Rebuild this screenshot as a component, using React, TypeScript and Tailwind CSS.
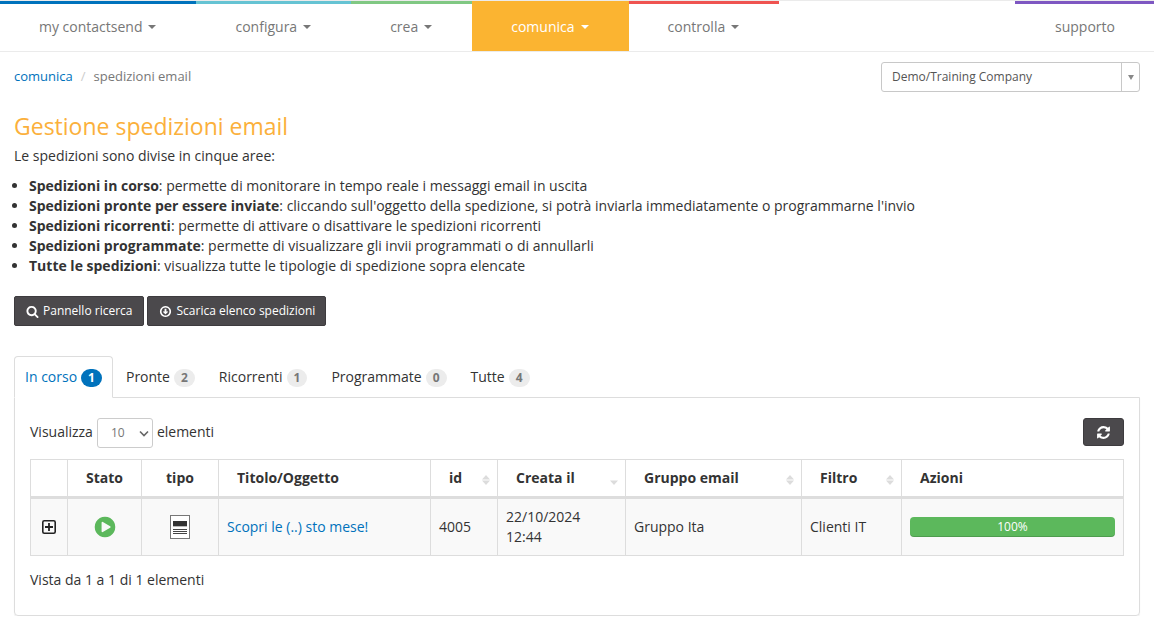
import { useState } from 'react';

const NAV_ITEMS = [
  { label: 'my contactsend', border: 'border-[#0072bc]' },
  { label: 'configura', border: 'border-[#65c3d3]' },
  { label: 'crea', border: 'border-[#80c883]' },
  { label: 'comunica', border: 'border-[#fbb431]', active: true },
  { label: 'controlla', border: 'border-[#ef5350]' },
];

const AREAS = [
  { name: 'Spedizioni in corso', text: 'permette di monitorare in tempo reale i messaggi email in uscita' },
  { name: 'Spedizioni pronte per essere inviate', text: "cliccando sull'oggetto della spedizione, si potrà inviarla immediatamente o programmarne l'invio" },
  { name: 'Spedizioni ricorrenti', text: 'permette di attivare o disattivare le spedizioni ricorrenti' },
  { name: 'Spedizioni programmate', text: 'permette di visualizzare gli invii programmati o di annullarli' },
  { name: 'Tutte le spedizioni', text: 'visualizza tutte le tipologie di spedizione sopra elencate' },
];

const TABS = [
  { label: 'In corso', count: 1 },
  { label: 'Pronte', count: 2 },
  { label: 'Ricorrenti', count: 1 },
  { label: 'Programmate', count: 0 },
  { label: 'Tutte', count: 4 },
];

const COLUMNS: { label: string; width: string; center?: boolean; sort?: 'both' | 'desc' }[] = [
  { label: '', width: 'w-[37px]' },
  { label: 'Stato', width: 'w-[74px]', center: true },
  { label: 'tipo', width: 'w-[77px]', center: true },
  { label: 'Titolo/Oggetto', width: 'w-[212px]' },
  { label: 'id', width: 'w-[67px]', sort: 'both' },
  { label: 'Creata il', width: 'w-[128px]', sort: 'desc' },
  { label: 'Gruppo email', width: 'w-[176px]', sort: 'both' },
  { label: 'Filtro', width: 'w-[100px]', sort: 'both' },
  { label: 'Azioni', width: 'w-[222px]' },
];

const ICONS = {
  search: 'M1216 832q0-185-131.5-316.5t-316.5-131.5-316.5 131.5-131.5 316.5 131.5 316.5 316.5 131.5 316.5-131.5 131.5-316.5zm512 832q0 52-38 90t-90 38q-54 0-90-38l-343-342q-179 124-399 124-143 0-273.5-55.5t-225-150-150-225-55.5-273.5 55.5-273.5 150-225 225-150 273.5-55.5 273.5 55.5 225 150 150 225 55.5 273.5q0 220-124 399l343 343q37 37 37 90z',
  download: 'M1248 928q0 14-10 24l-319 319q-10 9-23 9t-23-9l-320-320q-9-9-9-23 0-13 9.5-22.5t22.5-9.5h192v-352q0-13 9.5-22.5t22.5-9.5h192q13 0 22.5 9.5t9.5 22.5v352h192q14 0 23 9t9 23zm-352-576q-148 0-273 73t-198 198-73 273 73 273 198 198 273 73 273-73 198-198 73-273-73-273-198-198-273-73zm768 544q0 209-103 385.5t-279.5 279.5-385.5 103-385.5-103-279.5-279.5-103-385.5 103-385.5 279.5-279.5 385.5-103 385.5 103 279.5 279.5 103 385.5z',
  refresh: 'M1639 1056q0 5-1 7-64 268-268 434.5t-478 166.5q-146 0-282.5-55t-243.5-157l-129 129q-19 19-45 19t-45-19-19-45v-448q0-26 19-45t45-19h448q26 0 45 19t19 45-19 45l-137 137q71 66 161 102t187 36q134 0 250-65t186-179q11-17 53-117 8-23 30-23h192q13 0 22.5 9.5t9.5 22.5zm25-800v448q0 26-19 45t-45 19h-448q-26 0-45-19t-19-45 19-45l138-138q-148-137-349-137-134 0-250 65t-186 179q-11 17-53 117-8 23-30 23h-199q-13 0-22.5-9.5t-9.5-22.5v-7q65-268 270-434.5t480-166.5q146 0 284 55.5t245 156.5l130-129q19-19 45-19t45 19 19 45z',
  play: 'M896 128q209 0 385.5 103t279.5 279.5 103 385.5-103 385.5-279.5 279.5-385.5 103-385.5-103-279.5-279.5-103-385.5 103-385.5 279.5-279.5 385.5-103zm384 823q32-18 32-55t-32-55l-544-320q-31-19-64-1-32 19-32 56v640q0 37 32 56 16 8 32 8 17 0 32-9z',
};

function Icon({ name, className }: { name: keyof typeof ICONS; className: string }) {
  return (
    <svg className={className} viewBox="0 0 1792 1792" fill="currentColor" aria-hidden="true">
      <path d={ICONS[name]} />
    </svg>
  );
}

function Caret() {
  return (
    <svg className="w-2 h-1" viewBox="0 0 8 4" fill="currentColor" aria-hidden="true">
      <path d="M0 0h8L4 4z" />
    </svg>
  );
}

function SortIcon({ direction }: { direction: 'both' | 'desc' }) {
  return (
    <svg className="w-2 h-[10px] mt-1" viewBox="0 0 8 10" fill="#dcdcdc" aria-hidden="true">
      {direction === 'both' && <path d="M4 0l4 4.5H0z" />}
      <path d="M0 5.5h8L4 10z" />
    </svg>
  );
}

export default function App() {
  const [activeTab, setActiveTab] = useState('In corso');

  return (
    <div className="bg-white font-['Open_Sans',sans-serif] text-sm leading-5 text-[#333]">
      <nav className="flex h-[52px] border-y border-[#ebebeb] text-[#777]">
        {NAV_ITEMS.map(item => (
          <button
            key={item.label}
            className={`flex items-center gap-[6px] border-t-[3px] pr-10 pl-[39px] pb-[2px] ${item.border} ${
              item.active ? 'bg-[#fbb431] text-white' : ''
            }`}
          >
            {item.label}
            <Caret />
          </button>
        ))}
        <a href="#supporto" className="ml-auto flex items-center border-t-[3px] border-[#7e57c2] pr-[39px] pl-10 pb-[2px]">
          supporto
        </a>
      </nav>

      <main className="px-[14px]">
        <div className="flex items-start justify-between pt-[10px]">
          <div className="flex gap-2 pt-1 text-[13px] text-[#777]">
            <a href="#comunica" className="text-[#0072bc]">comunica</a>
            <span className="text-[#ccc]">/</span>
            <span>spedizioni email</span>
          </div>
          <div className="relative">
            <select
              aria-label="Azienda"
              className="block h-[30px] w-[259px] appearance-none rounded-[3px] border border-[#c8c8c8] bg-white pl-[10px] text-xs text-[#555]"
            >
              <option>Demo/Training Company</option>
            </select>
            <span className="pointer-events-none absolute inset-y-0 right-0 flex w-[19px] items-center justify-center border-l border-[#c8c8c8] text-[#888]">
              <svg className="w-[6px] h-[5px]" viewBox="0 0 6 5" fill="currentColor" aria-hidden="true">
                <path d="M0 0h6L3 5z" />
              </svg>
            </span>
          </div>
        </div>

        <h1 className="mt-5 text-[23px] leading-[28px] text-[#fbb03b]">Gestione spedizioni email</h1>
        <p className="mt-[6px]">Le spedizioni sono divise in cinque aree:</p>
        <ul className="mt-[10px] list-disc pl-[15px]">
          {AREAS.map(area => (
            <li key={area.name}>
              <strong>{area.name}</strong>: {area.text}
            </li>
          ))}
        </ul>

        <div className="mt-5 flex gap-[3px] text-xs text-white">
          <button className="flex h-[30px] items-center gap-1 rounded-[2px] border border-[#3d3b3e] bg-[#4b494c] px-[11px]">
            <Icon name="search" className="w-[13px] h-[13px]" />
            Pannello ricerca
          </button>
          <button className="flex h-[30px] items-center gap-1 rounded-[2px] border border-[#3d3b3e] bg-[#4b494c] pr-[10px] pl-[11px]">
            <Icon name="download" className="w-[13px] h-[13px]" />
            Scarica elenco spedizioni
          </button>
        </div>

        <div role="tablist" className="mt-[30px] flex gap-[2px]">
          {TABS.map(tab => (
            <button
              key={tab.label}
              role="tab"
              aria-selected={tab.label === activeTab}
              onClick={() => setActiveTab(tab.label)}
              className={`relative z-10 -mb-px flex h-[42px] items-center gap-1 rounded-t border px-[10px] ${
                tab.label === activeTab ? 'border-[#ddd] border-b-white bg-white text-[#0072bc]' : 'border-transparent'
              }`}
            >
              {tab.label}
              <span
                className={`mt-[2px] rounded-full px-[7px] text-xs leading-[18px] font-bold ${
                  tab.label === activeTab ? 'bg-[#0072bc] text-white' : 'bg-[#ececec] text-[#777]'
                }`}
              >
                {tab.count}
              </span>
            </button>
          ))}
        </div>

        <section className="rounded-b border border-[#ddd] px-[15px] pt-5 pb-[25px] shadow-[0_1px_1px_rgba(0,0,0,0.08)]">
          <div className="flex items-start justify-between">
            <label className="flex items-center gap-1">
              <span className="pb-[2px]">Visualizza</span>
              <span className="relative">
                <select className="block h-[30px] w-14 appearance-none rounded-[3px] border border-[#ccc] bg-white pl-[13px] text-xs text-[#777]">
                  <option>10</option>
                  <option>25</option>
                  <option>50</option>
                </select>
                <svg
                  className="pointer-events-none absolute top-3 right-1 w-[10px] h-[7px]"
                  viewBox="0 0 10 7"
                  fill="none"
                  stroke="#666"
                  strokeWidth="1.6"
                  aria-hidden="true"
                >
                  <path d="M1 1.5l4 4 4-4" />
                </svg>
              </span>
              <span className="pb-[2px]">elementi</span>
            </label>
            <button
              aria-label="Aggiorna"
              className="flex h-7 w-[41px] items-center justify-center rounded-[3px] border border-[#3d3b3e] bg-[#4b494c] text-white"
            >
              <Icon name="refresh" className="w-[15px] h-[15px]" />
            </button>
          </div>

          <table className="mt-[11px] w-full table-fixed border-collapse border border-[#ddd]">
            <thead>
              <tr className="h-[38px] border-b-[3px] border-[#ddd]">
                {COLUMNS.map(col => (
                  <th key={col.label} className={`border-x border-[#ddd] pr-[7px] font-bold ${col.center ? 'pl-[7px]' : 'pl-[18px]'} ${col.width}`}>
                    <div className={`flex items-center ${col.center ? 'justify-center' : 'justify-between'}`}>
                      {col.label}
                      {col.sort && <SortIcon direction={col.sort} />}
                    </div>
                  </th>
                ))}
              </tr>
            </thead>
            <tbody>
              <tr className="h-[58px] bg-[#f9f9f9] [&>td]:border-x [&>td]:border-[#ddd] [&>td]:px-2">
                <td>
                  <button aria-label="Espandi" className="mx-auto block">
                    <svg className="w-[14px] h-[14px]" viewBox="0 0 14 14" fill="none" stroke="#222" strokeWidth="1.6" aria-hidden="true">
                      <rect x="0.8" y="0.8" width="12.4" height="12.4" rx="1.5" />
                      <path d="M3 7h8M7 3v8" strokeWidth="1.8" />
                    </svg>
                  </button>
                </td>
                <td>
                  <Icon name="play" className="mx-auto w-6 h-6 text-[#5cb85c]" />
                </td>
                <td>
                  <svg className="mx-auto w-5 h-6" viewBox="0 0 20 24" aria-hidden="true">
                    <rect x="0.5" y="0.5" width="19" height="23" fill="#fff" stroke="#777" />
                    <path d="M3 6h14v5H3z" fill="#333" />
                    <path d="M3 11h14v1H3z" fill="#bbb" />
                    <path d="M3 14.5h14M3 16.5h14M3 18.5h14" stroke="#444" />
                  </svg>
                </td>
                <td>
                  <a href="#spedizione" className="text-[#0072bc]">Scopri le (..) sto mese!</a>
                </td>
                <td>4005</td>
                <td>
                  22/10/2024
                  <br />
                  12:44
                </td>
                <td>Gruppo Ita</td>
                <td>Clienti IT</td>
                <td>
                  <div className="h-5 rounded bg-[#5cb85c] text-center text-xs leading-5 text-white shadow-[inset_0_-1px_0_rgba(0,0,0,0.15)]">
                    100%
                  </div>
                </td>
              </tr>
            </tbody>
          </table>
          <p className="mt-[14px]">Vista da 1 a 1 di 1 elementi</p>
        </section>
      </main>
    </div>
  );
}
